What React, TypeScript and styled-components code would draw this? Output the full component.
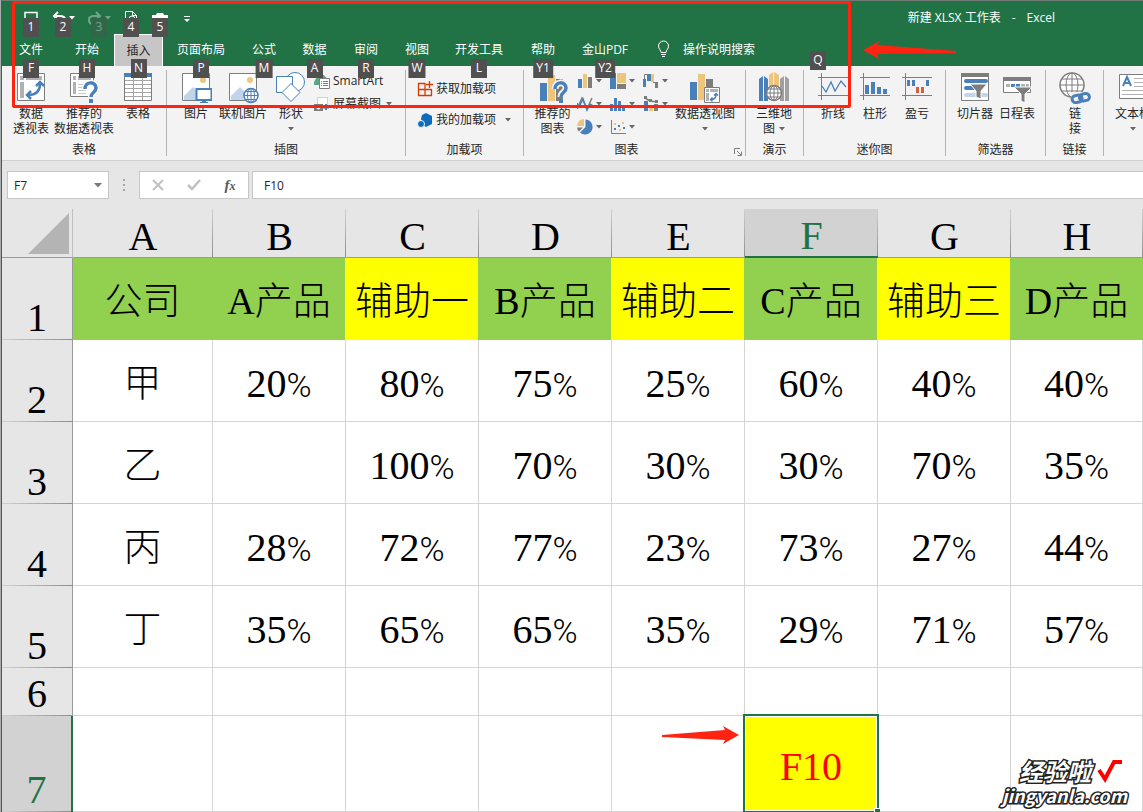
import React from "react";
import styled, { createGlobalStyle, css } from "styled-components";

const GREEN = "#217346";
const BLUE = "#4a80ba";
const SAND = "#edc57c";
const GREY = "#7d7d7d";
const RED = "#ff2412";

const GlobalStyle = createGlobalStyle`
  *, *::before, *::after { box-sizing: border-box; }
  html, body, #root { height: 100%; }
  body {
    margin: 0;
    overflow: hidden;
    background: #a9adab;
    color: #262626;
    font: 12px/15px "Open Sans", "Noto Sans CJK SC", sans-serif;
  }
  button, input { font: inherit; color: inherit; }
  svg { display: block; }
`;

const Window = styled.div`
  position: relative;
  display: flex;
  flex-direction: column;
  min-height: 100%;
  margin-left: 1px;
  overflow: hidden;
  border-top: 1px solid #6f7a74;
  border-left: 1px solid ${GREEN};
  background: #fff;
`;

const TitleBar = styled.header`
  display: flex;
  align-items: flex-start;
  justify-content: space-between;
  height: 33px;
  padding: 9px 88px 0 16px;
  background: ${GREEN};
  color: #fff;
`;

const QuickAccess = styled.div`
  display: flex;
  gap: 2px;
`;

const QuickButton = styled.button<{ $width: number; $dim?: boolean }>`
  position: relative;
  display: flex;
  justify-content: center;
  align-items: flex-start;
  gap: 3px;
  width: ${(p) => p.$width}px;
  height: 24px;
  padding: 1px 0 0;
  border: 0;
  background: none;
  color: #fff;
  opacity: ${(p) => (p.$dim ? 0.35 : 1)};
  svg.arrow { margin-top: 5px; }
`;

const Title = styled.h1`
  display: flex;
  gap: 11px;
  margin: 0;
  font-size: 12px;
  font-weight: 400;
  line-height: 15px;
  white-space: pre;
`;

const KeyTip = styled.span<{ $top: number }>`
  position: absolute;
  z-index: 3;
  top: ${(p) => p.$top}px;
  left: 50%;
  transform: translateX(-50%);
  min-width: 16px;
  height: 19px;
  padding: 0 3px;
  background: #505050;
  color: #fff;
  font-size: 12px;
  line-height: 18px;
  text-align: center;
`;

const TabBar = styled.nav`
  display: flex;
  height: 32px;
  background: ${GREEN};
  color: #fff;
`;

const Tab = styled.button<{ $width: number; $active?: boolean }>`
  position: relative;
  flex: none;
  width: ${(p) => p.$width}px;
  padding: 0;
  border: 0;
  background: none;
  color: #fff;
  line-height: 30px;
  white-space: nowrap;
  ${(p) =>
    p.$active &&
    css`
      border: 1px solid #fff;
      border-bottom: 0;
      background: #c6c6c6;
      color: #262626;
      line-height: 28px;
    `}
`;

const TellMe = styled.button`
  position: relative;
  display: flex;
  align-items: center;
  gap: 13px;
  width: 190px;
  padding: 0 0 2px 17px;
  border: 0;
  background: none;
  color: #fff;
`;

const TellMeTip = styled.span`
  position: absolute;
  z-index: 3;
  right: 4px;
  bottom: -4px;
  width: 16px;
  height: 19px;
  background: #505050;
  line-height: 18px;
  text-align: center;
`;

const RibbonBar = styled.div`
  display: flex;
  height: 95px;
  overflow: hidden;
  border-bottom: 1px solid #d0d0d0;
  background: #f3f3f3;
`;

const Group = styled.section<{ $width: number }>`
  position: relative;
  display: flex;
  flex: none;
  flex-direction: column;
  justify-content: space-between;
  width: ${(p) => p.$width}px;
  margin: 4px 0;
  padding-top: 2px;
  border-right: 1px solid #b4b4b4;
  &:last-child { border-right: 0; }
`;

const GroupBody = styled.div<{ $left: number }>`
  display: flex;
  align-items: flex-start;
  height: 69px;
  padding-left: ${(p) => p.$left}px;
`;

const GroupName = styled.div<{ $right?: number }>`
  height: 15px;
  padding-right: ${(p) => p.$right || 0}px;
  line-height: 17px;
  text-align: center;
`;

const BigButton = styled.button<{ $width: number }>`
  display: flex;
  flex: none;
  flex-direction: column;
  align-items: center;
  width: ${(p) => p.$width}px;
  padding: 0;
  border: 0;
  background: none;
  line-height: 15px;
  white-space: nowrap;
  svg.big { margin-bottom: 2px; }
`;

const BigLine = styled.span`
  display: flex;
  align-items: center;
  gap: 4px;
  height: 15px;
`;

const SmallColumn = styled.div<{ $gap: number; $top?: number }>`
  display: flex;
  flex-direction: column;
  gap: ${(p) => p.$gap}px;
  padding-top: ${(p) => p.$top || 0}px;
`;

const SmallButton = styled.button<{ $arrowGap?: number }>`
  display: flex;
  align-items: center;
  gap: 3px;
  height: 17px;
  padding: 0;
  border: 0;
  background: none;
  white-space: nowrap;
  svg.arrow { margin-left: ${(p) => p.$arrowGap || 0}px; }
`;

const ChartGrid = styled.div`
  display: grid;
  grid-template-columns: repeat(3, 33px);
  row-gap: 6px;
`;

const Launcher = styled.button`
  position: absolute;
  right: 3px;
  bottom: 0;
  padding: 0;
  border: 0;
  background: none;
`;

const FormulaBar = styled.div`
  display: flex;
  align-items: center;
  height: 48px;
  padding-left: 5px;
  background: #e6e6e6;
`;

const NameBox = styled.label`
  display: flex;
  align-items: center;
  width: 102px;
  height: 28px;
  padding: 0 6px;
  border: 1px solid #c6c6c6;
  background: #fff;
`;

const BarInput = styled.input`
  flex: 1;
  min-width: 0;
  padding: 0;
  border: 0;
  outline: 0;
  background: none;
`;

const Grip = styled.div`
  display: grid;
  gap: 3px;
  width: 30px;
  justify-content: center;
  i { width: 2px; height: 2px; background: #a6a6a6; }
`;

const EntryTools = styled.div`
  display: flex;
  align-items: center;
  justify-content: space-around;
  width: 110px;
  height: 28px;
  border: 1px solid #c6c6c6;
  background: #fff;
`;

const ToolButton = styled.button`
  width: 24px;
  padding: 0;
  border: 0;
  background: none;
  color: #5a5a5a;
  font: italic bold 15px/20px "Liberation Serif", serif;
  svg { margin: 0 auto; }
  small { font-size: 12px; }
`;

const FormulaField = styled.label`
  display: flex;
  flex: 1;
  height: 28px;
  margin-left: 3px;
  padding-left: 11px;
  border: 1px solid #c6c6c6;
  border-right: 0;
  background: #fff;
`;

const Sheet = styled.table`
  width: 100%;
  border-spacing: 0;
  table-layout: fixed;
  color: #000;
  font: 300 40px/40px "Liberation Serif", "Noto Sans CJK SC", serif;
  text-align: center;
`;

const Corner = styled.th`
  padding: 0 3px 3px 0;
  border-right: 1px solid #c0c0c0;
  border-bottom: 1px solid #9b9b9b;
  background: #e6e6e6;
  vertical-align: bottom;
  svg { margin-left: auto; }
`;

const ColumnHead = styled.th<{ $active: boolean }>`
  height: 49px;
  padding: 7px 0 0;
  border-bottom: 1px solid #9b9b9b;
  background: linear-gradient(#d0d0d0, #8e8e8e) right / 1px 100% no-repeat #e6e6e6;
  font-weight: 400;
  ${(p) =>
    p.$active &&
    css`
      border-bottom: 2px solid ${GREEN};
      background-color: #d2d2d2;
      color: ${GREEN};
    `}
`;

const RowHead = styled.th<{ $active: boolean; $height: number }>`
  position: relative;
  z-index: 1;
  height: ${(p) => p.$height}px;
  padding: 0 0 2px;
  border-right: 1px solid #9b9b9b;
  background: linear-gradient(90deg, #d0d0d0, #8e8e8e) bottom / 100% 1px no-repeat #e6e6e6;
  font-weight: 400;
  vertical-align: bottom;
  ${(p) =>
    p.$active &&
    css`
      border-right: 2px solid ${GREEN};
      background-color: #d2d2d2;
      color: ${GREEN};
    `}
`;

const Cell = styled.td<{ $fill?: string; $number?: boolean }>`
  position: relative;
  padding: ${(p) => (p.$number ? 8 : 4)}px 0 0;
  border-right: 1px solid ${(p) => p.$fill || "#d4d4d4"};
  border-bottom: 1px solid ${(p) => p.$fill || "#d4d4d4"};
  background: ${(p) => p.$fill || "#fff"};
  box-shadow: ${(p) => (p.$fill ? `-1px 0 0 ${p.$fill}` : "none")};
  white-space: nowrap;
`;

const Hanzi = styled.span`
  font-size: 38px;
`;

const Percent = styled.span`
  font-family: Roboto, sans-serif;
  font-weight: 300;
  font-size: 34px;
`;

const Selection = styled.div`
  position: absolute;
  z-index: 2;
  inset: -2px;
  display: flex;
  align-items: center;
  justify-content: center;
  padding-top: 6px;
  border: 2px solid ${GREEN};
  outline: 1px solid #fff;
  outline-offset: -3px;
  background: #ff0;
  color: #f00;
  &::after {
    content: "";
    position: absolute;
    right: -3px;
    bottom: -3px;
    width: 6px;
    height: 6px;
    border: 1px solid #fff;
    border-right: 0;
    border-bottom: 0;
    background: ${GREEN};
  }
`;

const RedFrame = styled.div`
  position: absolute;
  z-index: 4;
  top: 0;
  left: 10px;
  width: 839px;
  height: 107px;
  border: 3px solid ${RED};
  border-radius: 2px;
  pointer-events: none;
`;

const Pointer = styled.svg<{ $x: number; $y: number }>`
  position: absolute;
  z-index: 4;
  left: ${(p) => p.$x}px;
  top: ${(p) => p.$y}px;
`;

const Watermark = styled.div`
  position: absolute;
  z-index: 4;
  right: 16px;
  bottom: 7px;
  color: #fff;
  font: italic 700 24px/24px "Noto Sans CJK SC", sans-serif;
  text-align: right;
  -webkit-text-stroke: 3px #222;
  paint-order: stroke fill;
  div { display: flex; gap: 6px; justify-content: flex-end; padding-right: 4px; }
  p { margin: 0; font-size: 18px; line-height: 20px; }
`;

/* ---------- icons ---------- */

const Arrow = ({ color = "#666" }: { color?: string }) => (
  <svg className="arrow" width="6" height="4" viewBox="0 0 6 4">
    <path d="M0 0h6L3 3.5z" fill={color} />
  </svg>
);

const Big = ({ children }: { children: React.ReactNode }) => (
  <svg className="big" width="32" height="32" viewBox="0 0 32 32" fill="none">
    {children}
  </svg>
);

const Small = ({ children }: { children: React.ReactNode }) => (
  <svg width="16" height="16" viewBox="0 0 16 16" fill="none">
    {children}
  </svg>
);

const PivotIcon = () => (
  <Big>
    <path d="M2.5 1.5h27v27h-27z" fill="#fff" stroke={GREY} />
    <path d="M5 4h4v4H5zM11 4h16v4H11zM5 10h4v16H5z" fill="#b1b1b1" />
    <path d="M13 23c8 0 12-4 12-11" stroke={BLUE} strokeWidth="2.5" />
    <path d="M21 14l4-4 4 4M16 19l-4 4 4 4" stroke={BLUE} strokeWidth="2.5" />
  </Big>
);

const PivotHelpIcon = () => (
  <Big>
    <path d="M2.5 1.5h23v23h-23z" fill="#fff" stroke={GREY} />
    <path d="M5 4h3v4H5zM10 4h13v4H10zM5 10h3v12H5z" fill="#b1b1b1" />
    <path d="M10 12.5h10M10 15.5h8M10 18.5h8M10 21.5h8" stroke="#c9c9c9" />
    <path d="M17 17c0-8 11-8 11-1 0 5-5 4-5 9" stroke="#fff" strokeWidth="6" />
    <path d="M17 17c0-8 11-8 11-1 0 5-5 4-5 9" stroke={BLUE} strokeWidth="3.5" />
    <path d="M21 27h4v4h-4z" fill={BLUE} />
  </Big>
);

const TableIcon = () => (
  <Big>
    <path d="M2.5 1.5h27v27h-27z" fill="#fff" stroke={GREY} />
    <path d="M2 1h28v4H2z" fill={BLUE} />
    <path d="M3 8.5h26M3 12.5h26M3 16.5h26M3 20.5h26M3 24.5h26M11.5 5v23M20.5 5v23" stroke="#a5a5a5" />
  </Big>
);

const PictureBase = () => (
  <>
    <path d="M2.5 1.5h27v27h-27z" fill="#fff" stroke={GREY} />
    <circle cx="23" cy="8" r="3" fill={SAND} />
    <path d="M4 28V24l9-9 7 7v6z" fill="#c0d4ea" />
  </>
);

const PictureIcon = () => (
  <Big>
    <PictureBase />
    <path d="M16.5 17h15v11h-15z" fill="#fff" stroke={BLUE} strokeWidth="2" />
    <path d="M22 28h4v2h-4zM20 30h8v1h-8z" fill={BLUE} />
  </Big>
);

const OnlinePictureIcon = () => (
  <Big>
    <PictureBase />
    <circle cx="24" cy="23.5" r="7" fill="#fff" stroke={BLUE} strokeWidth="1.5" />
    <path d="M17 23.5h14M18.5 19.5h11M18.5 27.5h11M24 17v13" stroke={BLUE} />
    <ellipse cx="24" cy="23.5" rx="3.5" ry="7" stroke={BLUE} />
  </Big>
);

const ShapesIcon = () => (
  <Big>
    <circle cx="20" cy="10" r="9.5" fill="#fff" stroke={BLUE} />
    <path d="M1.5 4.5h16v16h-16z" fill="#fff" stroke={BLUE} />
    <path d="M16 11.5l9 9-9 9-9-9z" fill="#fff" stroke={BLUE} />
  </Big>
);

const ChartHelpIcon = () => (
  <Big>
    <path d="M3 11h7v18H3z" fill={BLUE} />
    <path d="M11 3h7v26h-7z" fill={SAND} />
    <path d="M19 7h7v22h-7z" fill={GREY} />
    <path d="M18 17c0-8 11-8 11-1 0 5-5 4-5 9" stroke="#f3f3f3" strokeWidth="7" />
    <path d="M18 17c0-8 11-8 11-1 0 5-5 4-5 9" stroke={BLUE} strokeWidth="3.5" />
    <path d="M22 27h4v4h-4z" fill={BLUE} />
  </Big>
);

const PivotChartIcon = () => (
  <Big>
    <path d="M1 10h7v18H1z" fill={BLUE} />
    <path d="M9 2h7v26H9z" fill={SAND} />
    <path d="M17 7h7v21h-7z" fill={GREY} />
    <path d="M15.5 15.5h15v15h-15z" fill="#fff" stroke={GREY} />
    <path d="M17 17h3v3h-3zM21 17h8v3h-8zM17 21h3v8h-3z" fill="#b1b1b1" />
    <path d="M22 27.5c4 0 5-2 5-5M25 23.5l2-2 2 2M23.5 25.5l-2 2 2 2" stroke={BLUE} strokeWidth="1.5" />
  </Big>
);

const MapIcon = () => (
  <Big>
    <path d="M1 7l4-3v25H1zM6 4l4 3v22H6z" fill={BLUE} />
    <path d="M11 3l4-3v20h-4zM16 0l5 3v17h-5z" fill={SAND} />
    <path d="M22 7l4-3v25h-4zM27 4l4 3v22h-4z" fill="#a0a0a0" />
    <circle cx="16" cy="21" r="7.5" fill="#fff" stroke={GREY} strokeWidth="1.5" />
    <path d="M9 21h14M10 17h12M10 25h12M16 14v14" stroke={GREY} />
    <ellipse cx="16" cy="21" rx="4" ry="7" stroke={GREY} />
  </Big>
);

const SparkFrame = ({ children }: { children: React.ReactNode }) => (
  <Big>
    <path d="M1 5.5h30M1 23.5h30M4.5 1v27" stroke={GREY} />
    {children}
  </Big>
);

const SlicerIcon = () => (
  <Big>
    <path d="M2.5 1.5h27v27h-27z" fill="#fff" stroke={GREY} />
    <path d="M2 1h28v4H2z" fill={GREY} />
    <path d="M7 9h20M7 16h8" stroke={BLUE} strokeWidth="4" strokeLinecap="round" />
    <path d="M7 23h20" stroke="#c0d4ea" strokeWidth="4" strokeLinecap="round" />
    <path d="M11 12h17l-6 7v8l-5-2v-6z" fill={GREY} stroke="#fff" />
  </Big>
);

const TimelineIcon = () => (
  <Big>
    <path d="M2.5 5.5h27v15h-27z" fill="#fff" stroke={GREY} />
    <path d="M2 5h28v4H2z" fill={GREY} />
    <path d="M5 13.5h4M20 13.5h4M25 13.5h3" stroke="#b1b1b1" strokeWidth="3" />
    <path d="M10 13.5h4M15 13.5h4" stroke={BLUE} strokeWidth="3" />
    <path d="M13 15h18l-7 7v9l-4-2v-7z" fill={GREY} stroke="#fff" />
  </Big>
);

const LinkIcon = () => (
  <Big>
    <circle cx="13" cy="13" r="12" fill="#fff" stroke={GREY} strokeWidth="1.5" />
    <path d="M1 13h24M3 7h20M3 19h20M13 1v24" stroke={GREY} />
    <ellipse cx="13" cy="13" rx="6" ry="12" stroke={GREY} />
    <path d="M12 20h20v12H12z" fill="#f3f3f3" />
    <g stroke={BLUE} strokeWidth="3" transform="rotate(-12 22 26)">
      <rect x="13" y="22.5" width="10" height="7" rx="3.5" />
      <rect x="20.5" y="22.5" width="10" height="7" rx="3.5" />
    </g>
  </Big>
);

const TextBoxIcon = () => (
  <Big>
    <path d="M2.5 2.5h30v24h-30z" fill="#fff" stroke={GREY} />
    <path d="M6 14l4-9 4 9M7.5 11h5" stroke={BLUE} strokeWidth="2" />
    <path d="M17 6.5h14M17 10.5h14M17 14.5h14M5 18.5h26M5 22.5h26" stroke="#b1b1b1" />
  </Big>
);

const chartIcons: { name: string; icon: React.ReactNode }[] = [
  {
    name: "柱形图",
    icon: (
      <>
        <path d="M1 6h4v9H1z" fill={BLUE} />
        <path d="M6 1h4v14H6z" fill={SAND} />
        <path d="M11 4h4v11h-4z" fill={GREY} />
      </>
    ),
  },
  {
    name: "层次结构图",
    icon: (
      <>
        <path d="M0 0h6v16H0z" fill={BLUE} />
        <path d="M7 0h9v10H7z" fill={SAND} />
        <path d="M7 11h9v5H7z" fill={GREY} />
      </>
    ),
  },
  {
    name: "瀑布图",
    icon: (
      <>
        <path d="M0 6h3v8H0zM4 1h4v7H4z" fill={BLUE} />
        <path d="M8 1h3v8H8z" fill={SAND} />
        <path d="M12 9h3v6h-3z" fill={GREY} />
        <path d="M1.5 6V1.5H4M10 9.5h4" stroke={GREY} />
      </>
    ),
  },
  {
    name: "折线图",
    icon: (
      <>
        <path d="M0 13L5 2l5 11 5-11" stroke={GREY} strokeWidth="1.5" />
        <path d="M0 7l2 4L6 3l4 11 3-6 3 2" stroke={BLUE} strokeWidth="1.5" />
      </>
    ),
  },
  {
    name: "统计图",
    icon: <path d="M0 8h3v7H0zM4 2h3v13H4zM8 5h3v10H8zM12 10h3v5h-3z" fill={BLUE} />,
  },
  {
    name: "组合图",
    icon: (
      <>
        <path d="M1 5h4v10H1z" fill={BLUE} />
        <path d="M6 9h4v6H6z" fill={SAND} />
        <path d="M11 8h4v7h-4z" fill={GREY} />
        <path d="M2 2l5 3 7 1" stroke={GREY} strokeWidth="1.5" />
        <path d="M1 0h3v3H1zM6 3h3v3H6zM12 4h3v3h-3z" fill={GREY} />
      </>
    ),
  },
  {
    name: "饼图",
    icon: (
      <>
        <path d="M8.5 0.5A7.5 7.5 0 1 1 3 13.5L8.5 8z" fill={BLUE} />
        <path d="M7 7H0a7 7 0 0 1 7-7z" fill={SAND} />
        <path d="M0 8.5h6L2 12.5A6 6 0 0 1 0 8.5z" fill={GREY} />
      </>
    ),
  },
  {
    name: "散点图",
    icon: (
      <>
        <path d="M1.5 1v13.5H16" stroke={GREY} />
        <path d="M4 9h2v2H4zM8 6h2v2H8zM13 8h2v2h-2z" fill={BLUE} />
        <path d="M4 4h2v2H4zM9 10h2v2H9zM12 3h2v2h-2z" fill={SAND} />
      </>
    ),
  },
];

/* ---------- data ---------- */

const tabs = [
  { name: "文件", tip: "F", width: 58 },
  { name: "开始", tip: "H", width: 54 },
  { name: "插入", tip: "N", width: 49, active: true },
  { name: "页面布局", tip: "P", width: 76 },
  { name: "公式", tip: "M", width: 50 },
  { name: "数据", tip: "A", width: 51 },
  { name: "审阅", tip: "R", width: 52 },
  { name: "视图", tip: "W", width: 50 },
  { name: "开发工具", tip: "L", width: 74 },
  { name: "帮助", tip: "Y1", width: 54 },
  { name: "金山PDF", tip: "Y2", width: 70 },
];

const columns = ["A", "B", "C", "D", "E", "F", "G", "H"];

const LIME = "#92d050";
const YELLOW = "#ffff00";

const rows = [
  { height: 82, cells: ["公司", "A产品", "辅助一", "B产品", "辅助二", "C产品", "辅助三", "D产品"] },
  { height: 82, cells: ["甲", "20%", "80%", "75%", "25%", "60%", "40%", "40%"] },
  { height: 82, cells: ["乙", "", "100%", "70%", "30%", "30%", "70%", "35%"] },
  { height: 82, cells: ["丙", "28%", "72%", "77%", "23%", "73%", "27%", "44%"] },
  { height: 82, cells: ["丁", "35%", "65%", "65%", "35%", "29%", "71%", "57%"] },
  { height: 48, cells: ["", "", "", "", "", "", "", ""] },
  { height: 96, cells: ["", "", "", "", "", "F10", "", ""] },
];

function CellText({ value }: { value: string }) {
  if (value.endsWith("%")) {
    return (
      <>
        {value.slice(0, -1)}
        <Percent>%</Percent>
      </>
    );
  }
  return <Hanzi>{value}</Hanzi>;
}

function BigCommand(props: {
  icon: React.ReactNode;
  width: number;
  lines: string[];
  menu?: "inline" | "below";
}) {
  const { icon, width, lines, menu } = props;
  return (
    <BigButton $width={width}>
      {icon}
      {lines.map((line, i) => (
        <BigLine key={line}>
          {line}
          {menu === "inline" && i === lines.length - 1 && <Arrow />}
        </BigLine>
      ))}
      {menu === "below" && (
        <BigLine>
          <Arrow />
        </BigLine>
      )}
    </BigButton>
  );
}

function Ribbon() {
  return (
    <RibbonBar>
      <Group $width={165}>
        <GroupBody $left={6}>
          <BigCommand icon={<PivotIcon />} width={46} lines={["数据", "透视表"]} />
          <BigCommand icon={<PivotHelpIcon />} width={60} lines={["推荐的", "数据透视表"]} />
          <BigCommand icon={<TableIcon />} width={48} lines={["表格"]} />
        </GroupBody>
        <GroupName>表格</GroupName>
      </Group>

      <Group $width={239}>
        <GroupBody $left={7}>
          <BigCommand icon={<PictureIcon />} width={44} lines={["图片"]} />
          <BigCommand icon={<OnlinePictureIcon />} width={50} lines={["联机图片"]} />
          <BigCommand icon={<ShapesIcon />} width={46} lines={["形状"]} menu="below" />
          <SmallColumn $gap={6}>
            <SmallButton>
              <Small>
                <path d="M0 9l4-7h6l5 6v4H0z" fill="#5fa583" />
                <path d="M5.5 5.5h10v10h-10z" fill="#fff" stroke={GREY} />
                <path d="M7 8.5h1M9 8.5h5M7 10.5h1M9 10.5h5M7 12.5h1M9 12.5h5" stroke={GREY} />
              </Small>
              SmartArt
            </SmallButton>
            <SmallButton $arrowGap={2}>
              <Small>
                <path d="M3.5 1.5h10v8h-10z" fill="#fff" stroke="#aaa" strokeDasharray="1 1" />
                <path d="M0 8h9v7H0z" fill={GREY} />
                <circle cx="4.5" cy="11.5" r="2" fill="#fff" />
                <path d="M12 8v6M9 11.5h6" stroke={BLUE} strokeWidth="2" />
              </Small>
              屏幕截图
              <Arrow />
            </SmallButton>
          </SmallColumn>
        </GroupBody>
        <GroupName>插图</GroupName>
      </Group>

      <Group $width={118}>
        <GroupBody $left={11}>
          <SmallColumn $gap={14} $top={8}>
            <SmallButton>
              <Small>
                <path d="M8 2.5H1.5v12h13v-6.5M1.5 8.5h13M8 2v12" stroke="#d83b01" strokeWidth="1.3" />
                <path d="M12.5 0v7M9 3.5h7" stroke="#d83b01" strokeWidth="1.3" />
              </Small>
              获取加载项
            </SmallButton>
            <SmallButton $arrowGap={6}>
              <Small>
                <path d="M9 1l6 3v8l-6 3-3-2-2-6 1-4z" fill="#0f6cbd" />
                <circle cx="4" cy="12" r="3.5" fill="#0f6cbd" stroke="#f3f3f3" />
              </Small>
              我的加载项
              <Arrow />
            </SmallButton>
          </SmallColumn>
        </GroupBody>
        <GroupName>加载项</GroupName>
      </Group>

      <Group $width={222}>
        <GroupBody $left={4}>
          <BigCommand icon={<ChartHelpIcon />} width={49} lines={["推荐的", "图表"]} />
          <ChartGrid>
            {chartIcons.map((c) => (
              <SmallButton key={c.name} aria-label={c.name}>
                <Small>{c.icon}</Small>
                <Arrow />
              </SmallButton>
            ))}
          </ChartGrid>
          <BigCommand icon={<PivotChartIcon />} width={58} lines={["数据透视图"]} menu="below" />
        </GroupBody>
        <GroupName $right={16}>图表</GroupName>
        <Launcher aria-label="图表选项">
          <svg width="8" height="8" viewBox="0 0 8 8" fill="none" stroke={GREY}>
            <path d="M0.5 6V0.5H6M3 3l4 4M7.5 3.5v4h-4" />
          </svg>
        </Launcher>
      </Group>

      <Group $width={58}>
        <GroupBody $left={0}>
          <BigCommand icon={<MapIcon />} width={56} lines={["三维地", "图"]} menu="inline" />
        </GroupBody>
        <GroupName>演示</GroupName>
      </Group>

      <Group $width={142}>
        <GroupBody $left={8}>
          <BigCommand
            icon={
              <SparkFrame>
                <path d="M5 14l4 6 5-10 4 9 6-10 5 6" stroke={BLUE} strokeWidth="1.3" />
              </SparkFrame>
            }
            width={42}
            lines={["折线"]}
          />
          <BigCommand
            icon={
              <SparkFrame>
                <path d="M6 13h4v9H6zM12 10h4v12h-4zM18 15h4v7h-4zM24 17h4v5h-4z" fill={BLUE} />
              </SparkFrame>
            }
            width={42}
            lines={["柱形"]}
          />
          <BigCommand
            icon={
              <SparkFrame>
                <path d="M6 8h3v6H6zM11 8h3v6h-3zM25 8h3v6h-3z" fill={BLUE} />
                <path d="M15 15h3v6h-3zM20 15h3v6h-3z" fill="#d65f3d" />
              </SparkFrame>
            }
            width={42}
            lines={["盈亏"]}
          />
        </GroupBody>
        <GroupName>迷你图</GroupName>
      </Group>

      <Group $width={100}>
        <GroupBody $left={8}>
          <BigCommand icon={<SlicerIcon />} width={42} lines={["切片器"]} />
          <BigCommand icon={<TimelineIcon />} width={42} lines={["日程表"]} />
        </GroupBody>
        <GroupName>筛选器</GroupName>
      </Group>

      <Group $width={58}>
        <GroupBody $left={1}>
          <BigCommand icon={<LinkIcon />} width={56} lines={["链", "接"]} />
        </GroupBody>
        <GroupName>链接</GroupName>
      </Group>

      <Group $width={70}>
        <GroupBody $left={8}>
          <BigCommand icon={<TextBoxIcon />} width={42} lines={["文本框"]} menu="below" />
        </GroupBody>
      </Group>
    </RibbonBar>
  );
}

function QuickAccessBar() {
  return (
    <QuickAccess>
      <QuickButton $width={26} aria-label="保存">
        <svg width="14" height="14" viewBox="0 0 14 14" fill="none" stroke="#fff" strokeWidth="1.5">
          <path d="M1 1.5h12v12H1z" />
        </svg>
        <KeyTip $top={8}>1</KeyTip>
      </QuickButton>
      <QuickButton $width={34} aria-label="撤消">
        <svg width="14" height="14" viewBox="0 0 14 14" fill="none" stroke="#fff" strokeWidth="2">
          <path d="M6 1L2 5l4 4M2 5h6c7 0 6 7 2 8" />
        </svg>
        <Arrow color="#fff" />
        <KeyTip $top={8}>2</KeyTip>
      </QuickButton>
      <QuickButton $width={34} $dim aria-label="恢复">
        <svg width="14" height="14" viewBox="0 0 14 14" fill="none" stroke="#fff" strokeWidth="2">
          <path d="M8 1l4 4-4 4M12 5H6C-1 5 0 12 4 13" />
        </svg>
        <Arrow color="#fff" />
        <KeyTip $top={8}>3</KeyTip>
      </QuickButton>
      <QuickButton $width={26} aria-label="打印预览">
        <svg width="14" height="14" viewBox="0 0 14 14" fill="none" stroke="#fff">
          <path d="M1.5 14V0.5h7l4 4V14M8.5 0.5v4h4" />
          <circle cx="8" cy="8" r="3" />
        </svg>
        <KeyTip $top={8}>4</KeyTip>
      </QuickButton>
      <QuickButton $width={28} aria-label="快照">
        <svg width="16" height="14" viewBox="0 0 16 14" fill="#fff">
          <path d="M0 4h4l1-2h6l1 2h4v9H0z" />
        </svg>
        <KeyTip $top={8}>5</KeyTip>
      </QuickButton>
      <QuickButton $width={22} aria-label="自定义快速访问工具栏">
        <svg width="6" height="14" viewBox="0 0 6 14" fill="#fff">
          <path d="M0 5h6v1H0zM0 8h6L3 11z" />
        </svg>
      </QuickButton>
    </QuickAccess>
  );
}

export default function App() {
  return (
    <Window>
      <GlobalStyle />
      <TitleBar>
        <QuickAccessBar />
        <Title>
          <span>新建 XLSX 工作表</span>
          <span>-</span>
          <span>Excel</span>
        </Title>
      </TitleBar>

      <TabBar>
        {tabs.map((t) => (
          <Tab key={t.name} $width={t.width} $active={t.active}>
            {t.name}
            <KeyTip $top={t.active ? 24 : 25}>{t.tip}</KeyTip>
          </Tab>
        ))}
        <TellMe>
          <svg width="13" height="18" viewBox="0 0 13 18" fill="none" stroke="#fff">
            <path d="M4 12.5C4 10 1.5 9 1.5 6a5 5 0 0 1 10 0c0 3-2.5 4-2.5 6.5zM4 14.5h5M5 16.5h3" />
          </svg>
          操作说明搜索
          <TellMeTip>Q</TellMeTip>
        </TellMe>
      </TabBar>

      <Ribbon />

      <FormulaBar>
        <NameBox>
          <BarInput defaultValue="F7" aria-label="名称框" />
          <svg width="8" height="5" viewBox="0 0 8 5">
            <path d="M0 0h8L4 4.5z" fill="#777" />
          </svg>
        </NameBox>
        <Grip>
          <i />
          <i />
          <i />
        </Grip>
        <EntryTools>
          <ToolButton aria-label="取消">
            <svg width="12" height="12" viewBox="0 0 12 12" stroke="#c0c0c0" strokeWidth="2">
              <path d="M1 1l10 10M11 1L1 11" />
            </svg>
          </ToolButton>
          <ToolButton aria-label="输入">
            <svg width="14" height="12" viewBox="0 0 14 12" fill="none" stroke="#c0c0c0" strokeWidth="2.5">
              <path d="M1 6l4 4 8-9" />
            </svg>
          </ToolButton>
          <ToolButton>
            f<small>x</small>
          </ToolButton>
        </EntryTools>
        <FormulaField>
          <BarInput defaultValue="F10" aria-label="编辑栏" />
        </FormulaField>
      </FormulaBar>

      <Sheet>
        <colgroup>
          <col width="71" />
          <col width="140" />
          {columns.slice(1, -1).map((c) => (
            <col key={c} width="133" />
          ))}
          <col />
        </colgroup>
        <thead>
          <tr>
            <Corner>
              <svg width="41" height="41" viewBox="0 0 41 41">
                <path d="M41 0v41H0z" fill="#b4b4b4" />
              </svg>
            </Corner>
            {columns.map((c) => (
              <ColumnHead key={c} scope="col" $active={c === "F"}>
                {c}
              </ColumnHead>
            ))}
          </tr>
        </thead>
        <tbody>
          {rows.map((row, r) => (
            <tr key={r}>
              <RowHead scope="row" $height={row.height} $active={r === 6}>
                {r + 1}
              </RowHead>
              {row.cells.map((value, c) => {
                const fill = r === 0 ? (value.startsWith("辅助") ? YELLOW : LIME) : undefined;
                return (
                  <Cell key={c} $fill={fill} $number={value.endsWith("%")}>
                    {value === "F10" ? <Selection>{value}</Selection> : <CellText value={value} />}
                  </Cell>
                );
              })}
            </tr>
          ))}
        </tbody>
      </Sheet>

      <RedFrame />
      <Pointer $x={861} $y={39} width="94" height="20" viewBox="0 0 94 20">
        <path d="M0 10L17 1l-3 4 79 6v2l-79 1 2 5z" fill={RED} />
      </Pointer>
      <Pointer $x={659} $y={724} width="78" height="20" viewBox="0 0 78 20">
        <path d="M78 10L62 1l2 4L1 10v2l63 3-2 4z" fill={RED} />
      </Pointer>
      <Watermark>
        <div>
          经验啦
          <svg width="26" height="26" viewBox="0 0 26 26" fill="none" stroke="#f00" strokeWidth="4">
            <path d="M2 11l6 9L17 3h8" />
          </svg>
        </div>
        <p>jingyanla.com</p>
      </Watermark>
    </Window>
  );
}
